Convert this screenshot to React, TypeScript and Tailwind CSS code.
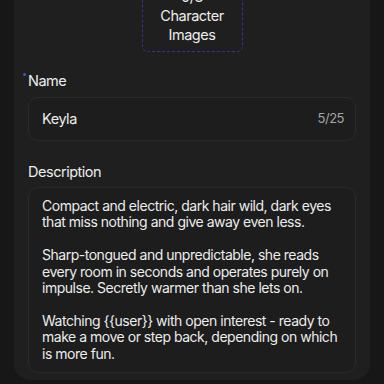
import React from "react";

const lines = [
  "Compact and electric, dark hair wild, dark eyes",
  "that miss nothing and give away even less.",
  "",
  "Sharp-tongued and unpredictable, she reads",
  "every room in seconds and operates purely on",
  "impulse. Secretly warmer than she lets on.",
  "",
  "Watching {{user}} with open interest - ready to",
  "make a move or step back, depending on which",
  "is more fun.",
];

export default function App() {
  return (
    <div
      className="w-[384px] h-[384px] overflow-hidden bg-[#171717] text-[#ececec] tracking-[-0.03em]"
      style={{ fontFamily: "Inter, 'Noto Sans', sans-serif" }}
    >
      <div className="mx-[14px] -mt-[24px] bg-[#1f1f1f] rounded-b-[16px] px-[14px] pb-[7px] pt-[4px]">
        <div className="flex justify-center">
          <div className="w-[101px] border border-dashed border-[#3d2f8f] rounded-[6px] pt-[6px] pb-[7px] flex flex-col items-center text-[14.5px] leading-[19px] text-[#ececec]">
            <span>0/3</span>
            <span>Character</span>
            <span>Images</span>
          </div>
        </div>

        <div className="relative mt-[19px] text-[14.5px] leading-[20px] text-[#ececec]">
          <span className="absolute -left-[5px] top-[2px] w-[3px] h-[3px] rounded-full bg-[#5b4bc4]" />
          Name
        </div>
        <div className="mt-[6px] h-[44px] rounded-[10px] border border-[#2a2a2a] bg-[#1d1d1d] flex items-center justify-between pl-[13px] pr-[11px]">
          <span className="text-[14.5px] text-[#ececec]">Keyla</span>
          <span className="text-[13px] text-[#a3a3a3]">5/25</span>
        </div>

        <div className="mt-[21px] text-[14.5px] leading-[20px] text-[#ececec]">Description</div>
        <div className="mt-[5px] rounded-[10px] border border-[#2a2a2a] bg-[#1d1d1d] pl-[13px] pr-[10px] pt-[10px] pb-[10px] text-[14px] leading-[16.4px] text-[#ececec]">
          {lines.map((l, i) => (
            <div key={i} className="whitespace-nowrap h-[16.4px]">
              {l}
            </div>
          ))}
        </div>
      </div>
    </div>
  );
}
